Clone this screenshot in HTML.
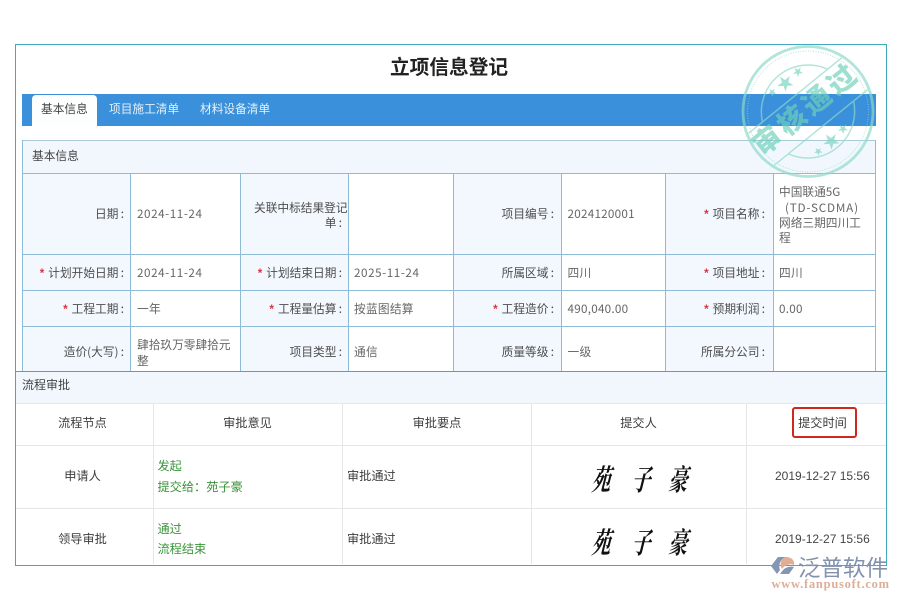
<!DOCTYPE html>
<html lang="zh">
<head>
<meta charset="utf-8">
<title>立项信息登记</title>
<style>
html,body{margin:0;padding:0;background:#fff}
body{width:900px;height:600px;overflow:hidden;position:relative;font-family:"Noto Sans CJK SC","Liberation Sans",sans-serif;font-size:11.7px;color:#555;filter:blur(.3px)}
.b{position:absolute}
.t{position:absolute;white-space:nowrap;line-height:16px;height:16px}
.v{color:#666;letter-spacing:.25px}
.d{letter-spacing:.55px}
.l{color:#4d4d4d}
.s{color:#d9333f;font-family:"Liberation Sans",sans-serif;font-weight:bold;margin-right:4px}
.h{color:#444}
.g{color:#3a943a;font-size:12.2px}
.c{text-align:center;color:#3d3d3d;font-size:12.2px}
.sig{position:absolute;width:27px;text-align:center;font-family:"Noto Serif CJK SC",serif;font-size:27px;line-height:30px;color:#111;font-weight:700;transform:skewX(-14deg) scale(.7,1.08);white-space:nowrap}
</style>
</head>
<body>
<!-- frame -->
<div class="b" style="left:15px;top:44px;width:870px;height:520px;border:1px solid #43a9bd"></div>

<div class="t" style="left:390px;top:52px;height:28px;line-height:28px;font-size:19.7px;font-weight:bold;color:#222">立项信息登记</div>

<!-- tabs -->
<div class="b" style="left:22px;top:94px;width:854px;height:32px;background:#3a90da"></div>
<div class="b" style="left:32px;top:95px;width:65px;height:31px;background:#fdfefe;border-radius:4px 4px 0 0"></div>
<div class="t" style="left:41px;top:101px;color:#444">基本信息</div>
<div class="t" style="left:109px;top:101px;color:#e4f1fc">项目施工清单</div>
<div class="t" style="left:200px;top:101px;color:#e4f1fc">材料设备清单</div>

<!-- info panel backgrounds -->
<div class="b" style="left:22px;top:140px;width:854px;height:33px;background:#f2f7fe"></div>
<div class="b" style="left:23px;top:174px;width:107px;height:197px;background:#f2f8fe"></div>
<div class="b" style="left:241px;top:174px;width:107px;height:197px;background:#f2f8fe"></div>
<div class="b" style="left:454px;top:174px;width:107px;height:197px;background:#f2f8fe"></div>
<div class="b" style="left:666px;top:174px;width:107px;height:197px;background:#f2f8fe"></div>

<!-- info panel lines -->
<div class="b" style="left:22px;top:140px;width:854px;height:1px;background:#aacbd6"></div>
<div class="b" style="left:22px;top:173px;width:854px;height:1px;background:#8ebcd8"></div>
<div class="b" style="left:22px;top:254px;width:854px;height:1px;background:#8ebcd8"></div>
<div class="b" style="left:22px;top:290px;width:854px;height:1px;background:#8ebcd8"></div>
<div class="b" style="left:22px;top:326px;width:854px;height:1px;background:#8ebcd8"></div>
<div class="b" style="left:22px;top:140px;width:1px;height:231px;background:#8ebcd8"></div>
<div class="b" style="left:130px;top:173px;width:1px;height:198px;background:#8ebcd8"></div>
<div class="b" style="left:240px;top:173px;width:1px;height:198px;background:#8ebcd8"></div>
<div class="b" style="left:348px;top:173px;width:1px;height:198px;background:#8ebcd8"></div>
<div class="b" style="left:453px;top:173px;width:1px;height:198px;background:#8ebcd8"></div>
<div class="b" style="left:561px;top:173px;width:1px;height:198px;background:#8ebcd8"></div>
<div class="b" style="left:665px;top:173px;width:1px;height:198px;background:#8ebcd8"></div>
<div class="b" style="left:773px;top:173px;width:1px;height:198px;background:#8ebcd8"></div>
<div class="b" style="left:875px;top:140px;width:1px;height:231px;background:#8ebcd8"></div>

<div class="t h" style="left:32px;top:148px">基本信息</div>

<!-- row 1 -->
<div class="t l" style="right:776px;top:206px">日期&#8201;:</div>
<div class="t v d" style="left:137px;top:206px">2024-11-24</div>
<div class="t l" style="left:254px;top:200px">关联中标结果登记</div>
<div class="t l" style="right:558px;top:215px">单&#8201;:</div>
<div class="t l" style="right:346px;top:206px">项目编号&#8201;:</div>
<div class="t v" style="left:567.5px;top:206px">2024120001</div>
<div class="t l" style="right:135px;top:206px"><span class="s">*</span>项目名称&#8201;:</div>
<div class="t v" style="left:779px;top:184px;letter-spacing:0">中国联通5G</div>
<div class="t v" style="left:785px;top:200px;letter-spacing:.8px">(TD-SCDMA)</div>
<div class="t v" style="left:779px;top:215px;letter-spacing:0">网络三期四川工</div>
<div class="t v" style="left:779px;top:230px">程</div>

<!-- row 2 -->
<div class="t l" style="right:776px;top:265px"><span class="s">*</span>计划开始日期&#8201;:</div>
<div class="t v d" style="left:137px;top:265px">2024-11-24</div>
<div class="t l" style="right:558px;top:265px"><span class="s">*</span>计划结束日期&#8201;:</div>
<div class="t v d" style="left:354px;top:265px">2025-11-24</div>
<div class="t l" style="right:346px;top:265px">所属区域&#8201;:</div>
<div class="t v" style="left:567.5px;top:265px">四川</div>
<div class="t l" style="right:135px;top:265px"><span class="s">*</span>项目地址&#8201;:</div>
<div class="t v" style="left:779px;top:265px">四川</div>

<!-- row 3 -->
<div class="t l" style="right:776px;top:301px"><span class="s">*</span>工程工期&#8201;:</div>
<div class="t v" style="left:137px;top:301px">一年</div>
<div class="t l" style="right:558px;top:301px"><span class="s">*</span>工程量估算&#8201;:</div>
<div class="t v" style="left:354px;top:301px">按蓝图结算</div>
<div class="t l" style="right:346px;top:301px"><span class="s">*</span>工程造价&#8201;:</div>
<div class="t v" style="left:567.5px;top:301px">490,040.00</div>
<div class="t l" style="right:135px;top:301px"><span class="s">*</span>预期利润&#8201;:</div>
<div class="t v" style="left:779px;top:301px">0.00</div>

<!-- row 4 -->
<div class="t l" style="right:776px;top:344px">造价(大写)&#8201;:</div>
<div class="t v" style="left:137px;top:337px;letter-spacing:0">肆拾玖万零肆拾元</div>
<div class="t v" style="left:137px;top:353px">整</div>
<div class="t l" style="right:558px;top:344px">项目类型&#8201;:</div>
<div class="t v" style="left:354px;top:344px">通信</div>
<div class="t l" style="right:346px;top:344px">质量等级&#8201;:</div>
<div class="t v" style="left:567.5px;top:344px">一级</div>
<div class="t l" style="right:135px;top:344px">所属分公司&#8201;:</div>

<!-- process section -->
<div class="b" style="left:16px;top:371px;width:870px;height:1px;background:#43a9bd"></div>
<div class="b" style="left:16px;top:372px;width:870px;height:31px;background:#f2f7fe"></div>
<div class="t h" style="left:22px;top:377px;font-size:12px">流程审批</div>
<div class="b" style="left:16px;top:403px;width:870px;height:1px;background:#e6e9ec"></div>
<div class="b" style="left:16px;top:445px;width:870px;height:1px;background:#e6e6e6"></div>
<div class="b" style="left:16px;top:508px;width:870px;height:1px;background:#e6e6e6"></div>
<div class="b" style="left:153px;top:404px;width:1px;height:160px;background:#e6e6e6"></div>
<div class="b" style="left:342px;top:404px;width:1px;height:160px;background:#e6e6e6"></div>
<div class="b" style="left:531px;top:404px;width:1px;height:160px;background:#e6e6e6"></div>
<div class="b" style="left:746px;top:404px;width:1px;height:160px;background:#e6e6e6"></div>

<div class="t c" style="left:16px;width:133px;top:414px">流程节点</div>
<div class="t c" style="left:154px;width:187px;top:414px">审批意见</div>
<div class="t c" style="left:343px;width:188px;top:414px">审批要点</div>
<div class="t c" style="left:532px;width:213px;top:414px">提交人</div>
<div class="t c" style="left:747px;width:151px;top:414px">提交时间</div>
<div class="b" style="left:792px;top:407px;width:61px;height:27px;border:2px solid #d0281e;border-radius:3px"></div>

<div class="t c" style="left:16px;width:133px;top:467px">申请人</div>
<div class="t g" style="left:157.5px;top:457px">发起</div>
<div class="t g" style="left:157.5px;top:477.5px">提交给：苑子豪</div>
<div class="t c" style="left:347px;top:467px">审批通过</div>
<div class="sig" style="left:589.5px;top:463px">苑</div>
<div class="sig" style="left:629.5px;top:463px">子</div>
<div class="sig" style="left:667px;top:463px">豪</div>
<div class="t" style="left:775px;top:468px;font-family:'Liberation Sans',sans-serif;font-size:12px;color:#444">2019-12-27 15:56</div>

<div class="t c" style="left:16px;width:133px;top:529.5px">领导审批</div>
<div class="t g" style="left:157.5px;top:519.5px">通过</div>
<div class="t g" style="left:157.5px;top:540px">流程结束</div>
<div class="t c" style="left:347px;top:529.5px">审批通过</div>
<div class="sig" style="left:589.5px;top:526px">苑</div>
<div class="sig" style="left:629.5px;top:526px">子</div>
<div class="sig" style="left:667px;top:526px">豪</div>
<div class="t" style="left:775px;top:530.5px;font-family:'Liberation Sans',sans-serif;font-size:12px;color:#444">2019-12-27 15:56</div>

<!-- stamp -->
<svg class="b" style="left:730px;top:35px;opacity:.68" width="160" height="150" viewBox="730 35 160 150">
  <g fill="none" stroke="#8edac9">
    <circle cx="808" cy="111.5" r="65" stroke-width="2.8"/>
    <circle cx="808" cy="111.5" r="60.5" stroke-width="1" stroke-dasharray="1 1.5"/>
    <g transform="rotate(-39 808 111.5)" stroke-width="1.5">
      <line x1="748" y1="91" x2="868" y2="91"/>
      <line x1="748" y1="132" x2="868" y2="132"/>
      <path d="M766 91A47 47 0 0 1 850 91"/>
      <path d="M766 132A47 47 0 0 0 850 132"/>
      <text x="808" y="118" text-anchor="middle" font-family="'Noto Sans CJK SC',sans-serif" font-weight="900" font-size="28" fill="#6fd0ba" stroke="none" letter-spacing="4">审核通过</text>
    </g>
  </g>
  <g fill="#78d4c0" font-family="'DejaVu Sans',sans-serif" text-anchor="middle">
    <text x="785" y="90" font-size="21" transform="rotate(-39 785 83)">★</text>
    <text x="798" y="76" font-size="13" transform="rotate(-39 798 72)">★</text>
    <text x="772" y="96" font-size="11" transform="rotate(-39 772 92)">★</text>
    <text x="831" y="148" font-size="21" transform="rotate(-39 831 141)">★</text>
    <text x="843" y="133" font-size="13" transform="rotate(-39 843 129)">★</text>
    <text x="818" y="155" font-size="11" transform="rotate(-39 818 151)">★</text>
  </g>
</svg>

<!-- logo -->
<svg class="b" style="left:770px;top:555px" width="28" height="22" viewBox="770 555 28 22">
  <path d="M771 566L778 557H786C781 559 778 564 780 570L777 574Z" fill="#8496b3"/>
  <path d="M786 557C792 557 795 561 794 565C790 563 785 565 782 569C779 564 781 559 786 557Z" fill="#e0ae94"/>
  <path d="M794 567L789 574H780L783 570C786 567 790 566 794 567Z" fill="#8496b3"/>
</svg>
<div class="t" style="left:798px;top:555px;height:24px;line-height:24px;font-size:22.5px;color:#8292ae;font-family:'Noto Sans CJK SC',sans-serif;font-weight:400">泛普软件</div>
<div class="t" style="left:771.5px;top:576px;font-family:'Liberation Serif',serif;font-size:12.5px;font-weight:bold;letter-spacing:.75px;color:#dcae98">www.fanpusoft.com</div>
</body>
</html>
